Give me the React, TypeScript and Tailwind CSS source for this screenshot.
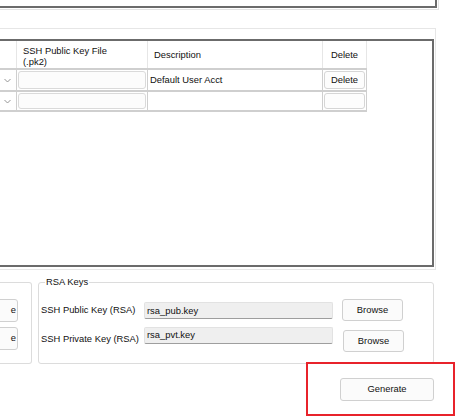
import React from "react";

const Chevron = () => (
  <svg width="7" height="5" viewBox="0 0 7 5" className="block">
    <polyline points="0.5,1 3.5,4 6.5,1" fill="none" stroke="#8a8a8a" strokeWidth="0.9" />
  </svg>
);

const HeaderRow = () => (
  <div className="flex h-[29px] border-b-2 border-[#cfcfcf]">
    <div className="w-[17px] border-r border-[#e6e6e6]" />
    <div className="w-[131px] border-r border-[#e6e6e6] pl-[6px] pt-[4px] leading-[11px]">
      <div>SSH Public Key File</div>
      <div>(.pk2)</div>
    </div>
    <div className="w-[175px] border-r border-[#e6e6e6] pl-[6px] pt-[2px] flex items-center">Description</div>
    <div className="w-[44px] border-r border-[#e6e6e6] pt-[2px] flex items-center justify-center">Delete</div>
  </div>
);

const DataRow = ({ desc, del, h }: { desc: string; del: boolean; h: string }) => (
  <div className={`flex ${h} border-b-2 border-[#cfcfcf]`}>
    <div className="w-[17px] border-r border-[#cfcfcf] flex items-center pl-[4px]">
      <Chevron />
    </div>
    <div className="w-[131px] border-r border-[#cfcfcf] p-[1px]">
      <div className="h-full rounded-[3px] border border-[#dadada] bg-[#fcfcfc]" />
    </div>
    <div className="w-[175px] border-r border-[#cfcfcf] pl-[2px] flex items-center">{desc}</div>
    <div className="w-[44px] border-r border-[#cfcfcf] p-[1px]">
      <div className="h-full rounded-[3px] border border-[#d6d6d6] bg-[#fdfdfd] flex items-center justify-center">
        {del ? "Delete" : ""}
      </div>
    </div>
  </div>
);

const Btn = ({ children, className }: { children?: React.ReactNode; className: string }) => (
  <div
    className={`rounded-[3px] border border-[#d0d0d0] bg-[#fbfbfb] flex items-center justify-center ${className}`}
  >
    {children}
  </div>
);

export default function App() {
  return (
    <div
      className="relative w-[460px] h-[420px] overflow-hidden bg-white text-[#111] text-[9.4px]"
      style={{ fontFamily: '"Liberation Sans", Arial, sans-serif' }}
    >
      {/* top panel remnant */}
      <div className="w-[439px] h-[10px] border-b border-r border-[#e3e3e3]">
        <div className="w-[437px] h-[8px] border-b-2 border-r-2 border-[#6b6b6b]" />
      </div>

      {/* grid panel */}
      <div className="mt-[18px] w-[436px] h-[242px] border-t border-r border-b border-[#e6e6e6] pt-[10px]">
        <div className="w-[434px] h-[228px] border-t-2 border-r-2 border-b-2 border-[#6b6b6b]">
          <div className="w-[367px]">
            <HeaderRow />
            <DataRow desc="Default User Acct" del h="h-[22px]" />
            <DataRow desc="" del={false} h="h-[20px]" />
          </div>
        </div>
      </div>

      {/* bottom group boxes */}
      <div className="mt-[12px] w-[434px] flex">
        <div className="w-[32px] h-[82px] border-t border-r border-b border-[#dcdcdc] rounded-r-[3px] overflow-hidden pt-[16px]">
          <Btn className="ml-[-40px] w-[58px] h-[23px] !justify-end pr-[1px]">e</Btn>
          <Btn className="mt-[5px] ml-[-40px] w-[58px] h-[23px] !justify-end pr-[1px]">e</Btn>
        </div>
        <div className="relative ml-[6px] w-[396px] h-[82px] border border-[#dcdcdc] rounded-[3px] pt-[16px] pl-[2px]">
          <div className="absolute top-[-7px] left-[6px] px-[1px] bg-white leading-[12px]">RSA Keys</div>
          <div className="flex items-center h-[22px]">
            <div className="w-[103px]">SSH Public Key (RSA)</div>
            <div className="w-[189px] h-[17px] bg-[#efefef] border border-[#e2e2e2] border-b-[#9e9e9e] rounded-[2px] pl-[2px] pt-[2px] leading-[12px]">
              rsa_pub.key
            </div>
            <Btn className="ml-[9px] w-[61px] h-[22px]">Browse</Btn>
          </div>
          <div className="flex items-start mt-[6px]">
            <div className="w-[103px] mt-[5px] leading-[14px]">SSH Private Key (RSA)</div>
            <div className="w-[189px] h-[17px] bg-[#efefef] border border-[#e2e2e2] border-b-[#9e9e9e] rounded-[2px] pl-[2px] pt-[1px] leading-[12px]">
              rsa_pvt.key
            </div>
            <Btn className="ml-[10px] mt-[3px] w-[61px] h-[22px]">Browse</Btn>
          </div>
        </div>
      </div>

      <div className="mt-[14px] w-[434px] flex justify-end">
        <Btn className="w-[94px] h-[23px]">Generate</Btn>
      </div>

      {/* red annotation box */}
      <div className="absolute left-[306px] top-[362px] w-[149px] h-[54px] border-2 border-[#e8232b]" />
    </div>
  );
}
